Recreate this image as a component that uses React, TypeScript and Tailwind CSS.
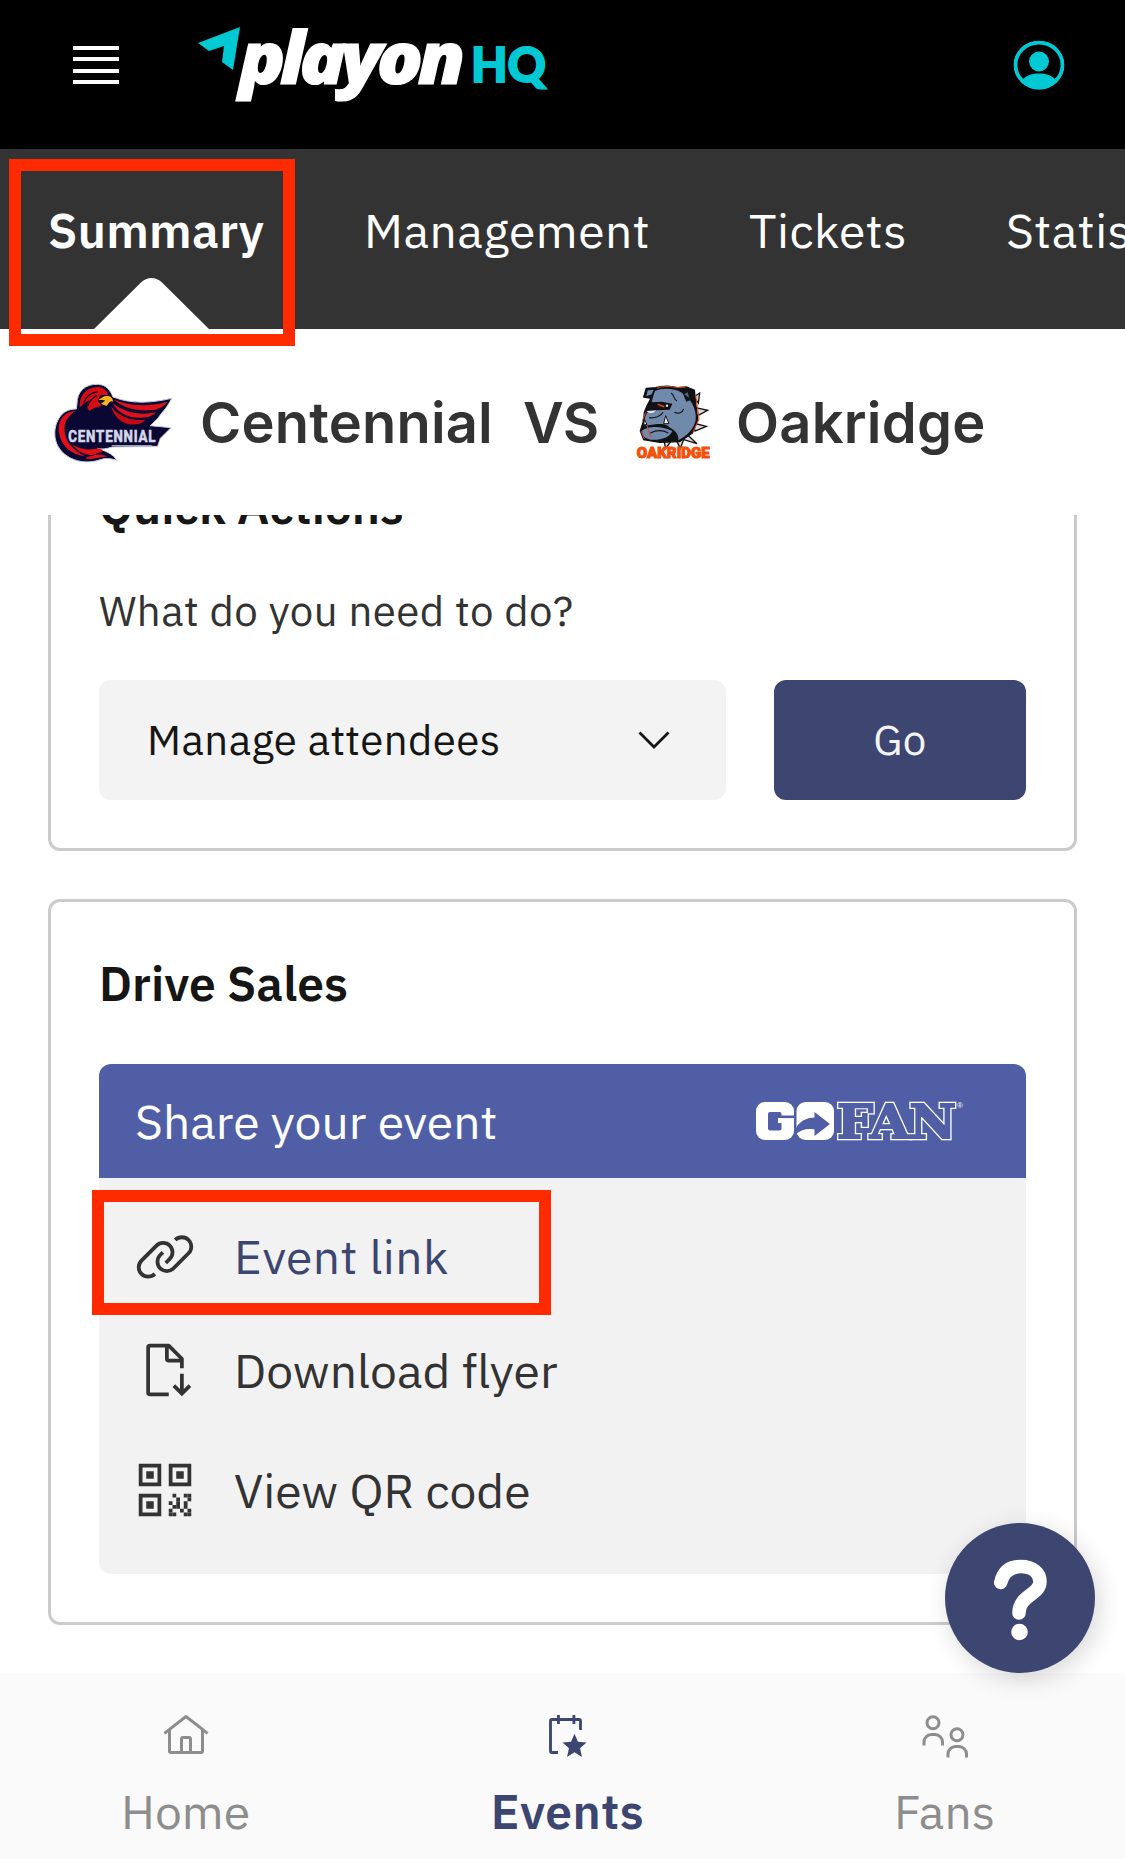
import type { ReactNode } from "react";

function PlayonLogo() {
  return (
    <svg className="ml-[75px] h-[100px] w-[370px]" viewBox="194 14 370 100" aria-label="playon HQ">
      <polygon points="198,43 240,27 233,70 222,62 224,46 209,51" fill="#00c9d4" />
      <text
        x="239"
        y="83.5"
        textLength="221"
        lengthAdjust="spacingAndGlyphs"
        className="fill-white stroke-white stroke-[1.2] font-['Open_Sans','Noto_Sans',sans-serif] text-[72px] font-extrabold italic tracking-[-5px]"
      >
        playon
      </text>
      <text
        x="471"
        y="81.5"
        textLength="75"
        lengthAdjust="spacingAndGlyphs"
        className="fill-[#00c9d4] stroke-[#00c9d4] stroke-[1.8] font-['Lato',sans-serif] text-[47px] font-black"
      >
        HQ
      </text>
    </svg>
  );
}

function AccountIcon() {
  return (
    <svg className="size-[52px]" viewBox="0 0 52 52">
      <clipPath id="account-clip">
        <ellipse cx="26" cy="25" rx="25.5" ry="24.5" />
      </clipPath>
      <g clipPath="url(#account-clip)">
        <ellipse cx="26" cy="25" rx="23.6" ry="22.6" fill="none" stroke="#00c9d4" strokeWidth="4" />
        <circle cx="26" cy="21.5" r="10" fill="#00c9d4" />
        <path d="M8 42C11 36 18 33.5 26 33.5S41 36 44 42L40 52H12Z" fill="#00c9d4" />
      </g>
    </svg>
  );
}

function EagleLogo() {
  return (
    <svg className="h-[95px] w-[140px]" viewBox="0 0 420 285" aria-label="Centennial">
      <path
        d="M96 86C96 50 120 26 160 28C184 30 196 46 204 66C260 88 320 84 380 70C366 100 350 112 340 128L316 152L378 158L346 190L338 214L202 216C184 222 168 224 158 220C176 226 204 236 216 256C196 250 180 248 160 256C110 270 60 252 38 212C20 176 32 132 58 112C70 104 82 102 94 102Z"
        fill="#0b0733"
        stroke="#c9cce0"
        strokeWidth="3"
      />
      <path d="M104 98C102 60 124 38 158 36C176 37 186 48 190 60L166 60L158 78L170 92C156 98 144 96 134 108C122 98 128 84 134 74C120 82 112 88 104 98Z" fill="#d80a12" />
      <path d="M116 84C122 66 136 54 158 50M128 94C132 80 142 68 156 62" fill="none" stroke="#0b0733" strokeWidth="4" />
      <path d="M178 64C192 60 204 66 204 80C198 76 192 80 186 92C180 92 172 90 168 84C174 84 178 80 180 76L160 74Z" fill="#f7b51b" />
      <path d="M206 74C262 96 320 94 368 80C352 98 334 106 312 106C272 108 236 98 206 74Z" fill="#e0101a" />
      <path d="M202 84C240 114 286 122 334 112C322 124 304 130 282 128C246 128 218 112 202 84Z" fill="#e0101a" />
      <path d="M198 94C222 126 260 140 302 134C292 146 274 150 254 148C226 144 206 122 198 94Z" fill="#c80812" />
      <path d="M92 108C56 110 36 140 42 174C50 218 84 240 122 244C86 226 66 206 60 176C54 146 66 124 92 108Z" fill="#e0101a" />
      <path d="M82 208C108 226 134 226 162 220C188 232 160 232 150 238C128 244 100 234 82 208Z" fill="#e0101a" />
      <path d="M120 250C142 238 168 236 188 244C162 246 146 256 120 250Z" fill="#e0101a" />
      <path d="M200 212L322 212" stroke="#9aa0b8" strokeWidth="4" />
      <text
        x="70"
        y="200"
        textLength="264"
        lengthAdjust="spacingAndGlyphs"
        className="fill-[#d5d8ea] stroke-[#d5d8ea] stroke-[2] font-['Roboto',sans-serif] text-[47px] font-bold tracking-[3px]"
      >
        CENTENNIAL
      </text>
    </svg>
  );
}

function BulldogLogo() {
  return (
    <svg className="h-[95px] w-[100px]" viewBox="0 0 300 285" aria-label="Oakridge">
      <path d="M206 66L224 54L220 84ZM212 98L248 106L214 124ZM204 144L244 154L210 168ZM184 176L216 206L176 194ZM150 188L166 220L180 184ZM116 194L122 220L140 196Z" fill="#d9d9d9" stroke="#111" strokeWidth="4" />
      <path d="M56 66L64 40L92 38C110 32 140 32 156 38L184 36L208 46L212 84L218 134L202 174L164 200L104 202L56 194L46 168L56 136L58 112L66 92L78 70Z" fill="#0f1115" stroke="#0f1115" strokeWidth="4" />
      <path d="M96 40C112 33 140 33 156 38L182 36M212 60L222 132L204 172M62 112L52 138M48 168L58 192" fill="none" stroke="#e0451a" strokeWidth="3" />
      <path d="M90 48C112 38 150 40 168 52C196 68 216 102 212 136C206 164 184 184 160 196C162 178 150 166 134 158C126 146 108 144 62 152C56 138 60 122 68 112L96 106L134 104L142 86L110 80L80 82C84 66 86 58 90 48Z" fill="#7189ab" />
      <path d="M52 166C66 154 108 150 142 168C134 188 106 196 78 194C60 192 50 182 52 166Z" fill="#7189ab" />
      <path d="M64 64L68 46L86 44L80 58Z" fill="#7189ab" />
      <path d="M172 52L192 44L200 74L184 80Z" fill="#121419" />
      <path d="M178 58L188 52L192 68Z" fill="#566a88" />
      <path d="M70 94L92 86L116 94L132 88L132 98L112 101L86 99L72 104Z" fill="#121419" />
      <path d="M98 88L118 95" stroke="#e0451a" strokeWidth="5" />
      <circle cx="126" cy="92" r="3.5" fill="#eee" />
      <path d="M64 108L94 106L84 114L72 114Z" fill="#e8dfd8" />
      <path d="M76 174C96 164 116 166 130 174M114 112C108 124 90 130 72 128M138 54C150 60 144 74 156 78M148 112C162 118 172 112 176 102M132 158C150 168 158 180 156 190" fill="none" stroke="#15181f" strokeWidth="3.5" />
      <path d="M116 146L122 122L132 146ZM56 150L58 134L66 148Z" fill="#f1ede8" stroke="#15181f" strokeWidth="3" />
      <path d="M66 152L78 188" stroke="#e0451a" strokeWidth="3" />
      <text
        x="35"
        y="249"
        textLength="219"
        lengthAdjust="spacingAndGlyphs"
        className="fill-[#f4500c] stroke-[#f4500c] stroke-[3] font-['Roboto',sans-serif] text-[43px] font-black"
      >
        OAKRIDGE
      </text>
    </svg>
  );
}

function GoFanLogo() {
  return (
    <svg className="h-[46px] w-[212px]" viewBox="754 1098 212 46" aria-label="GoFan">
      <rect x="756" y="1102" width="38" height="38" rx="9" fill="#fff" />
      <rect x="768" y="1112" width="13.5" height="18.5" rx="2" fill="#505fa5" />
      <rect x="777" y="1115.5" width="18" height="2.6" fill="#505fa5" />
      <rect x="778" y="1118" width="4" height="5" fill="#fff" />
      <rect x="796.5" y="1102" width="37.5" height="38" rx="9" fill="#fff" />
      <path d="M796 1128C800 1121 806 1118 814.5 1117.5V1112L830 1124L814.5 1136V1129.5C807 1128 801 1130 796 1134Z" fill="#505fa5" />
      <text
        x="837"
        y="1138"
        textLength="119"
        lengthAdjust="spacingAndGlyphs"
        className="fill-[#505fa5] stroke-white stroke-[4.4] font-['DejaVu_Serif',serif] text-[47px] font-bold [paint-order:stroke]"
      >
        FAN
      </text>
      <text
        x="837"
        y="1138"
        textLength="119"
        lengthAdjust="spacingAndGlyphs"
        aria-hidden="true"
        className="fill-[#505fa5] stroke-[#505fa5] stroke-[2] font-['DejaVu_Serif',serif] text-[47px] font-bold"
      >
        FAN
      </text>
      <text x="957" y="1108" className="fill-white font-['Liberation_Sans',sans-serif] text-[8px]">
        ®
      </text>
    </svg>
  );
}

function LinkIcon() {
  return (
    <svg className="size-[60px] fill-[#333]" viewBox="0 0 32 32">
      <path d="M29.25,6.76a6,6,0,0,0-8.5,0l1.42,1.42a4,4,0,1,1,5.67,5.67l-8,8a4,4,0,1,1-5.67-5.66l1.41-1.42-1.41-1.42-1.42,1.42a6,6,0,0,0,0,8.5A6,6,0,0,0,17,25a6,6,0,0,0,4.27-1.76l8-8A6,6,0,0,0,29.25,6.76Z" />
      <path d="M4.19,24.82a4,4,0,0,1,0-5.67l8-8a4,4,0,0,1,5.67,0A3.94,3.94,0,0,1,19,14a4,4,0,0,1-1.17,2.85L15.71,19l1.42,1.42,2.12-2.12a6,6,0,0,0-8.51-8.51l-8,8a6,6,0,0,0,0,8.51A6,6,0,0,0,7,28a6.07,6.07,0,0,0,4.28-1.76L9.86,24.82A4,4,0,0,1,4.19,24.82Z" />
    </svg>
  );
}

function DownloadIcon() {
  return (
    <svg className="size-[60px] fill-[#333]" viewBox="0 0 32 32">
      <path d="M30 25L28.586 23.586 26 26.172 26 18 24 18 24 26.172 21.414 23.586 20 25 25 30 30 25z" />
      <path d="M18,28H8V4h8v6a2.0058,2.0058,0,0,0,2,2h6v3h2V10a.9092.9092,0,0,0-.3-.7l-7-7A.9087.9087,0,0,0,18,2H8A2.0058,2.0058,0,0,0,6,4V28a2.0058,2.0058,0,0,0,2,2H18ZM18,4.4,23.6,10H18Z" />
    </svg>
  );
}

const qrCells = [".X..XX", "..X..X", "X.X.X.", ".XX.X.", "X..X.X", "XX..XX"];

function QrIcon() {
  return (
    <svg className="size-[60px] fill-[#333]" viewBox="0 0 32 32">
      {[[2, 2], [18, 2], [2, 18]].map(([x, y]) => (
        <g key={`${x}-${y}`}>
          <rect x={x + 1} y={y + 1} width="10" height="10" fill="none" stroke="#333" strokeWidth="2" />
          <rect x={x + 4} y={y + 4} width="4" height="4" />
        </g>
      ))}
      {qrCells.flatMap((row, r) =>
        row.split("").map((cell, c) =>
          cell === "X" ? <rect key={`${r}-${c}`} x={18 + c * 2} y={18 + r * 2} width="2" height="2" /> : null,
        ),
      )}
    </svg>
  );
}

function HomeIcon() {
  return (
    <svg className="size-12 fill-[#8d8d8d]" viewBox="0 0 32 32">
      <path d="M16.6123,2.2138a1.01,1.01,0,0,0-1.2427,0L1,13.4194l1.2427,1.5717L4,13.6209V26a2.0041,2.0041,0,0,0,2,2H26a2.0037,2.0037,0,0,0,2-2V13.63L29.7573,15,31,13.4282ZM18,26H14V18h4Zm2,0V18a2.0023,2.0023,0,0,0-2-2H14a2.002,2.002,0,0,0-2,2v8H6V12.0615l10-7.79,10,7.8005V26Z" />
    </svg>
  );
}

function EventsIcon() {
  return (
    <svg className="mr-px size-12" viewBox="0 0 32 32">
      <path d="M10 27H6a1 1 0 0 1-1-1V6a1 1 0 0 1 1-1H24a1 1 0 0 1 1 1V12M10.3 2V8M20.6 2V8" fill="none" stroke="#3d4671" strokeWidth="1.9" />
      <path d="M21 14.5L23.3 19.8L29 20.3L24.7 24.1L26 30L21 26.9L16 30L17.3 24.1L13 20.3L18.7 19.8Z" fill="#3d4671" />
    </svg>
  );
}

function FansIcon() {
  return (
    <svg className="size-12" viewBox="0 0 48 48" fill="none" stroke="#8d8d8d" strokeWidth="3">
      <circle cx="12" cy="10.8" r="6" />
      <path d="M3 33.5V30a7.5 7.5 0 0 1 7.5-7.5H14a7.5 7.5 0 0 1 7.5 7.5V33.5" />
      <circle cx="36" cy="22.8" r="6" />
      <path d="M27 45.5V42a7.5 7.5 0 0 1 7.5-7.5H38a7.5 7.5 0 0 1 7.5 7.5V45.5" />
    </svg>
  );
}

function ActionRow({ icon, label, className }: { icon: ReactNode; label: string; className: string }) {
  return (
    <div className={`flex items-center gap-[39px] pl-9 text-[48px] leading-[60px] ${className}`}>
      {icon}
      <span>{label}</span>
    </div>
  );
}

function TabItem({ icon, label, className }: { icon: ReactNode; label: string; className: string }) {
  return (
    <div className={`flex flex-col items-center gap-[21px] pt-[39px] text-[48px] leading-[60px] ${className}`}>
      {icon}
      <span>{label}</span>
    </div>
  );
}

export default function App() {
  return (
    <div className="relative flex h-[1859px] w-[1125px] flex-col overflow-hidden bg-white font-['IBM_Plex_Sans','Roboto',sans-serif] text-[#161616]">
      <header className="flex h-[149px] items-start bg-black pl-[73px]">
        <div className="mt-[46px] flex w-[46px] flex-col gap-[7.3px]">
          <div className="h-1 bg-white" />
          <div className="h-1 bg-white" />
          <div className="h-1 bg-white" />
          <div className="h-1 bg-white" />
        </div>
        <div className="pt-[14px]">
          <PlayonLogo />
        </div>
        <div className="mr-[60px] ml-auto pt-10">
          <AccountIcon />
        </div>
      </header>

      <nav className="relative flex h-[180px] items-center gap-24 bg-[#333] pb-[18px] pl-12 text-[48px] leading-[60px] tracking-[0.48px] whitespace-nowrap text-white">
        <span className="w-[220px] shrink-0 font-semibold tracking-[0.3px]">Summary</span>
        <span className="w-[289px] shrink-0">Management</span>
        <span className="w-[161px] shrink-0">Tickets</span>
        <span className="shrink-0">Statistics</span>
        <svg className="absolute bottom-0 left-[94px] h-[51px] w-[116px]" viewBox="0 0 116 51">
          <path d="M0 51L47 4.5C53 -1.5 62 -1.5 68 4.5L115 51Z" fill="#fff" />
        </svg>
      </nav>

      <section className="flex h-[186px] shrink-0 items-center pl-[45px] font-['Inter',sans-serif] text-[56px] leading-[84px] font-semibold text-[#333]">
        <EagleLogo />
        <span className="mt-[2px] ml-[15px] w-[323px] tracking-[0.2px]">Centennial</span>
        <span className="mt-[2px] w-[102px] tracking-[-1px]">VS</span>
        <BulldogLogo />
        <span className="mt-[2px] ml-[11px] tracking-[0.25px]">Oakridge</span>
      </section>

      <main className="flex h-[1158px] shrink-0 flex-col gap-12 overflow-hidden px-12">
        <section className="-mt-[42px] rounded-xl border-[3px] border-[#cbcbcb] px-12 pb-12">
          <h2 className="text-[48px] leading-[60px] font-semibold tracking-[-0.08px]">Quick Actions</h2>
          <p className="mt-[48px] text-[42px] leading-[54px] tracking-[0.44px] text-[#333]">What do you need to do?</p>
          <div className="mt-[42px] flex h-[120px] gap-12 text-[42px] leading-[54px] tracking-[0.42px]">
            <div className="flex w-[627px] items-center justify-between rounded-xl bg-[#f3f3f3] pr-[56px] pl-12">
              <span>Manage attendees</span>
              <svg className="h-5 w-8" viewBox="0 0 32 20">
                <path d="M1.5 2.5L16 17L30.5 2.5" fill="none" stroke="#161616" strokeWidth="2.8" />
              </svg>
            </div>
            <button className="flex-1 rounded-xl bg-[#3d4671] text-[#f4f4f4]">Go</button>
          </div>
        </section>

        <section className="rounded-xl border-[3px] border-[#cbcbcb] px-12 pt-[51px] pb-12">
          <h2 className="text-[48px] leading-[60px] font-semibold">Drive Sales</h2>
          <div className="relative mt-[51px]">
            <div className="flex h-[114px] items-center justify-between rounded-t-xl bg-[#505fa5] pr-[60px] pl-[36px] text-[48px] leading-[60px] text-white">
              <span>Share your event</span>
              <GoFanLogo />
            </div>
            <div className="h-[396px] rounded-b-xl bg-[#f2f2f2] pt-[18px] text-[#333]">
              <ActionRow className="h-[120px] tracking-[0.4px] text-[#3d4671]" icon={<LinkIcon />} label="Event link" />
              <ActionRow className="h-[107px]" icon={<DownloadIcon />} label="Download flyer" />
              <ActionRow className="h-[134px]" icon={<QrIcon />} label="View QR code" />
            </div>
            <div className="absolute top-[126px] -left-[7px] h-[125px] w-[459px] border-[12px] border-[#ff2a00]" />
          </div>
        </section>
      </main>

      <footer className="grid h-[186px] shrink-0 grid-cols-[371px_393px_361px] bg-[#fafafa]">
        <TabItem className="text-[#8d8d8d]" icon={<HomeIcon />} label="Home" />
        <TabItem className="font-semibold tracking-[0.48px] text-[#3d4671]" icon={<EventsIcon />} label="Events" />
        <TabItem className="text-[#8d8d8d]" icon={<FansIcon />} label="Fans" />
      </footer>

      <div className="absolute top-[159px] left-[9px] h-[187px] w-[286px] border-[12px] border-[#ff2a00]" />

      <div className="absolute top-[1523px] right-[30px] size-[150px] rounded-full bg-[#3d4671] shadow-[4px_6px_24px_rgba(0,0,0,0.16)]">
        <svg className="size-full" viewBox="0 0 150 150" aria-label="Help">
          <path d="M55.7 59.5C58.5 48 66 43.5 76 43.5C87.5 43.5 95 50 95 58.5C95 72 74 72 74 90" fill="none" stroke="#fff" strokeWidth="13.5" strokeLinecap="round" />
          <circle cx="74.5" cy="109" r="8.3" fill="#fff" />
        </svg>
      </div>
    </div>
  );
}
